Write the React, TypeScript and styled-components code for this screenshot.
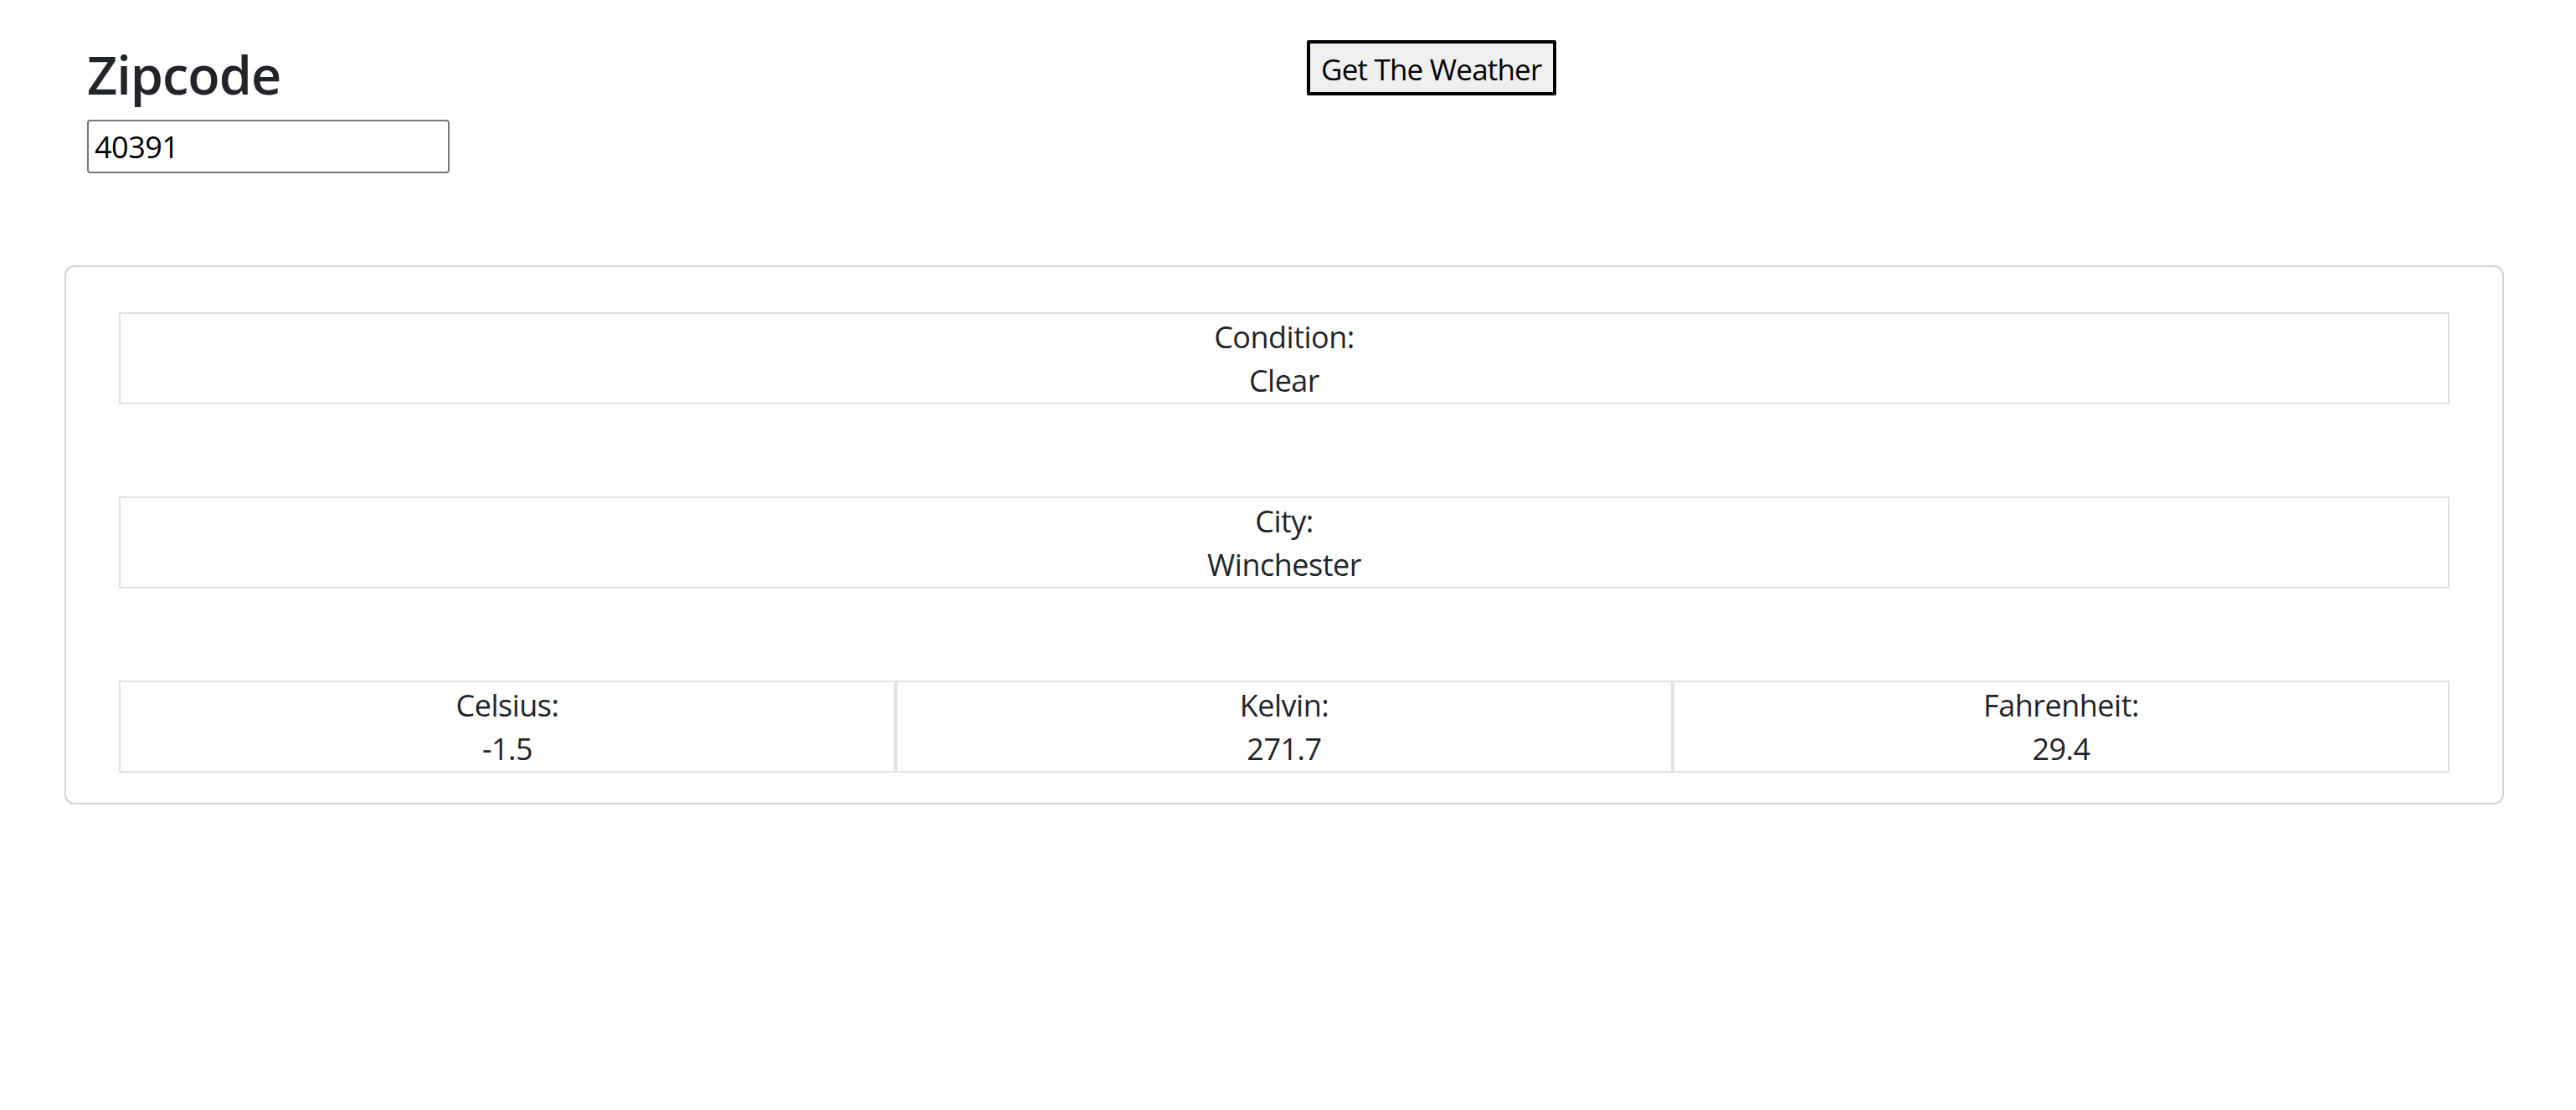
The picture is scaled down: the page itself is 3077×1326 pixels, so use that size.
import React from "react";
import styled, { createGlobalStyle } from "styled-components";

const GlobalStyle = createGlobalStyle`
  html, body {
    margin: 0;
    padding: 0;
    background: #ffffff;
  }
  body {
    font-family: "Open Sans", "Noto Sans", Arial, sans-serif;
    color: #212529;
    font-size: 36px;
    line-height: 54px;
  }
  * { box-sizing: border-box; }
`;

const Page = styled.main`
  padding: 0 86px 0 77px;
`;

const Header = styled.section`
  display: grid;
  grid-template-columns: 1fr 1fr;
  padding-top: 49px;
`;

const Column = styled.div`
  padding: 0 27px;
  display: flex;
  flex-direction: column;
  align-items: flex-start;
`;

const Title = styled.h2`
  margin: 0 0 15px;
  font-size: 63px;
  line-height: 79px;
  font-weight: 600;
  letter-spacing: -1px;
`;

const ZipInput = styled.input`
  width: 433px;
  height: 64px;
  border: 2px solid #767676;
  border-radius: 4px;
  padding: 0 7px;
  font-family: inherit;
  font-size: 36px;
  color: #000;
  letter-spacing: -0.5px;
  outline: none;
`;

const WeatherButton = styled.button`
  margin-top: -1px;
  height: 66px;
  padding: 3px 14px 0 13px;
  border: 4px solid #000;
  border-radius: 2px;
  background: #efefef;
  color: #000;
  font-family: inherit;
  font-size: 35px;
  line-height: 55px;
  letter-spacing: -0.8px;
`;

const Card = styled.section`
  margin-top: 110px;
  border: 2px solid #d2d2d2;
  border-radius: 12px;
  padding: 54px 63px 36px;
  display: flex;
  flex-direction: column;
  gap: 110px;
`;

const Row = styled.div<{ $cols: number }>`
  display: grid;
  grid-template-columns: repeat(${(p) => p.$cols}, 1fr);
`;

const Cell = styled.div`
  border: 2px solid #dee2e6;
  padding-top: 2px;
  text-align: center;
  font-size: 36px;
  line-height: 52px;
  letter-spacing: -0.5px;
`;

const Label = styled.div``;
const Value = styled.div``;

type Item = { label: string; value: string };

const rows: Item[][] = [
  [{ label: "Condition:", value: "Clear" }],
  [{ label: "City:", value: "Winchester" }],
  [
    { label: "Celsius:", value: "-1.5" },
    { label: "Kelvin:", value: "271.7" },
    { label: "Fahrenheit:", value: "29.4" },
  ],
];

export default function App() {
  return (
    <>
      <GlobalStyle />
      <Page>
        <Header>
          <Column>
            <Title>Zipcode</Title>
            <ZipInput defaultValue="40391" />
          </Column>
          <Column>
            <WeatherButton>Get The Weather</WeatherButton>
          </Column>
        </Header>
        <Card>
          {rows.map((row, i) => (
            <Row key={i} $cols={row.length}>
              {row.map((item) => (
                <Cell key={item.label}>
                  <Label>{item.label}</Label>
                  <Value>{item.value}</Value>
                </Cell>
              ))}
            </Row>
          ))}
        </Card>
      </Page>
    </>
  );
}
